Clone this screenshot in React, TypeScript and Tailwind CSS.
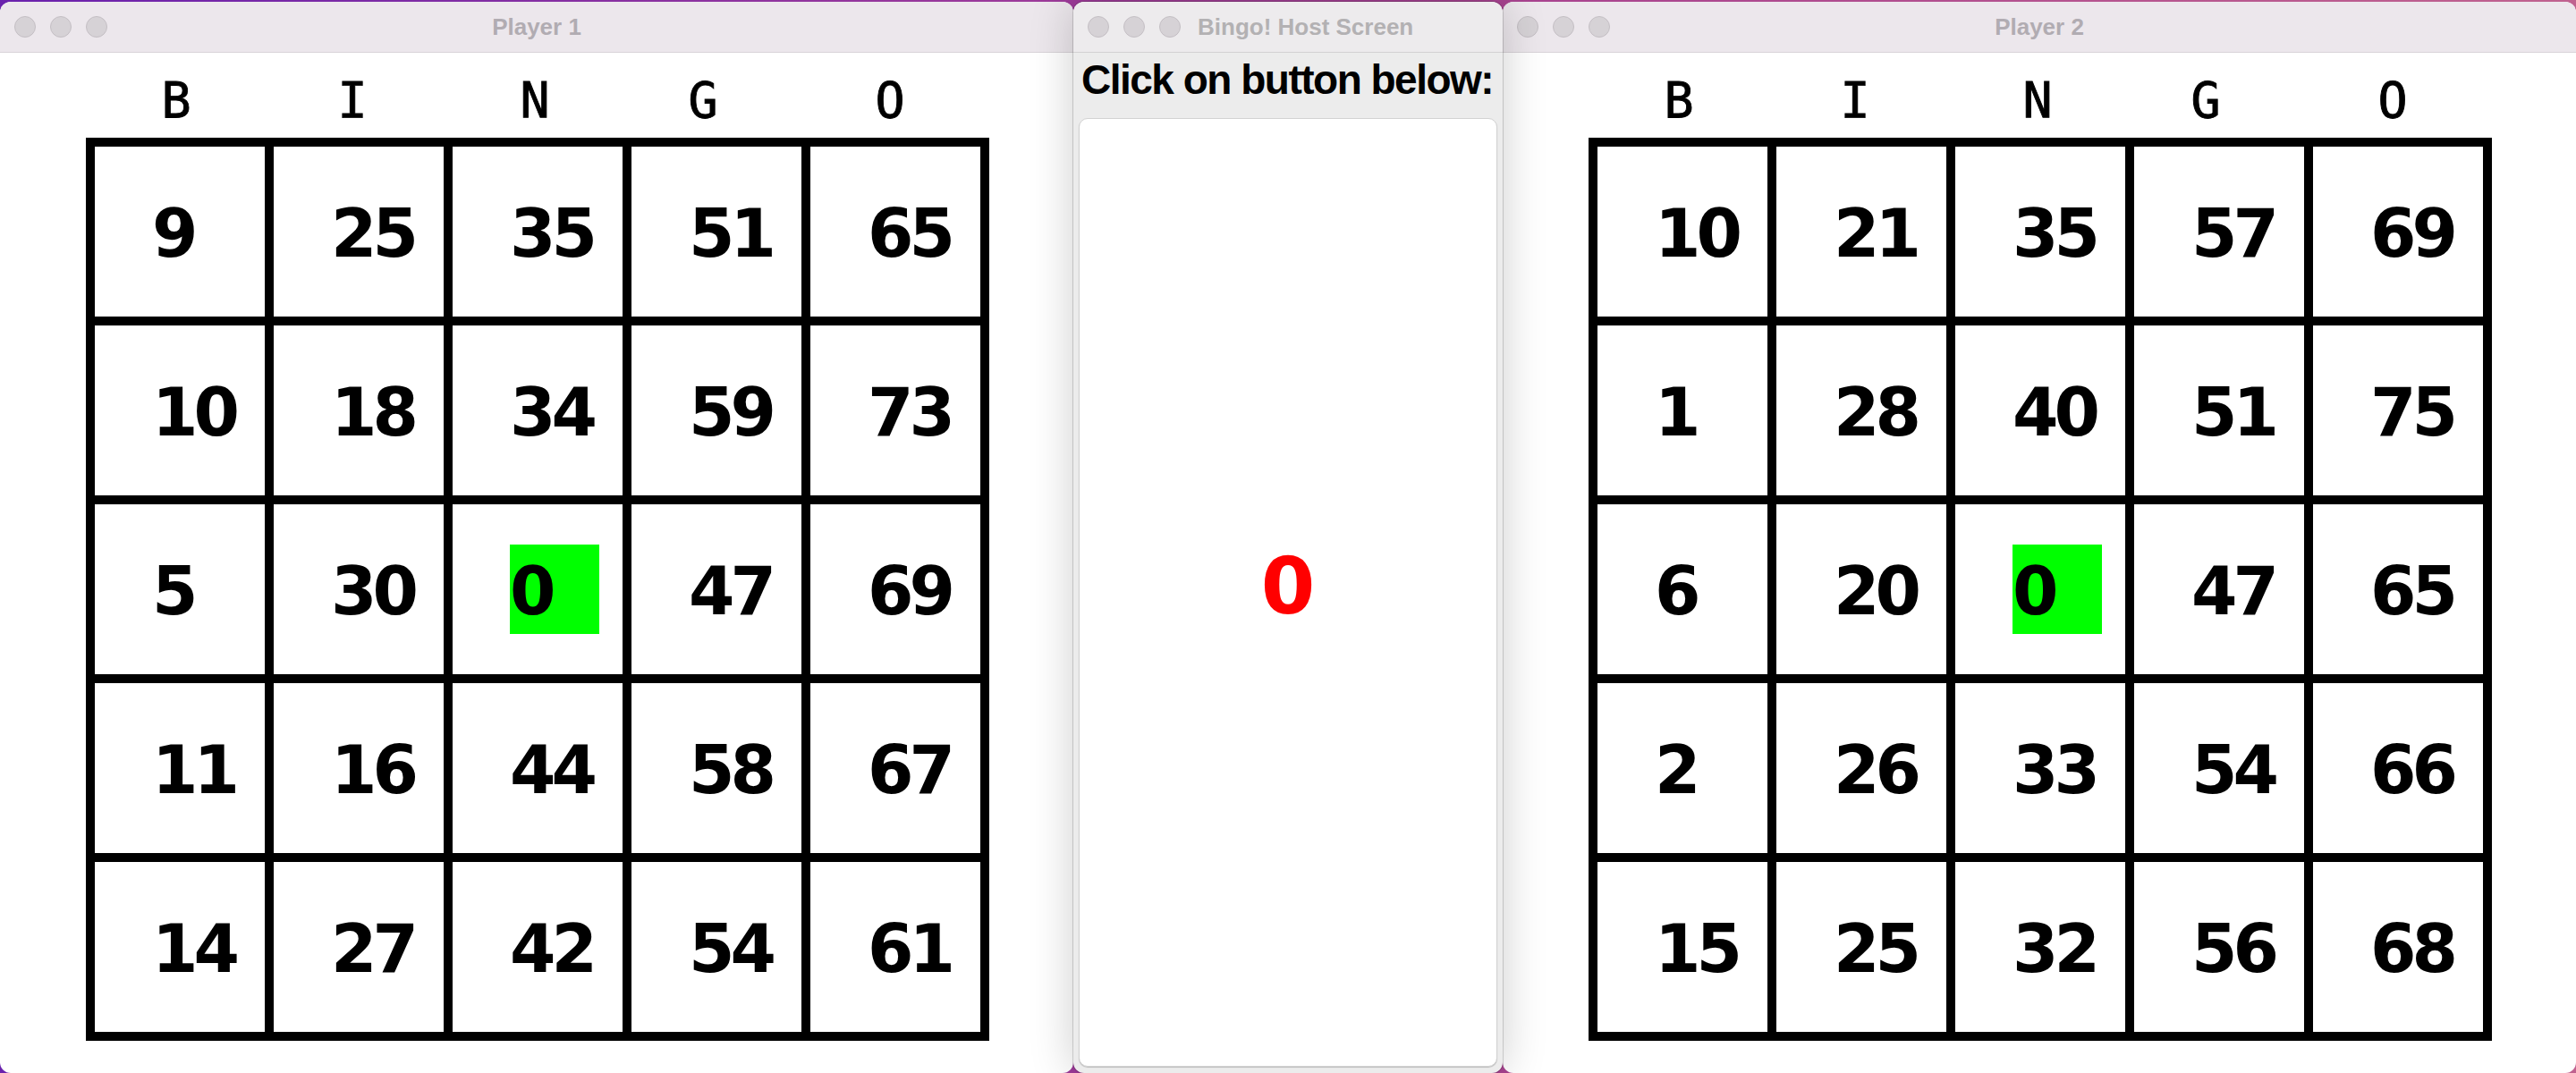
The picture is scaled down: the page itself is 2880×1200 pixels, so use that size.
import React from 'react';
import clsx from 'clsx';

const player1 = [
  [9, 25, 35, 51, 65],
  [10, 18, 34, 59, 73],
  [5, 30, 0, 47, 69],
  [11, 16, 44, 58, 67],
  [14, 27, 42, 54, 61],
];

const player2 = [
  [10, 21, 35, 57, 69],
  [1, 28, 40, 51, 75],
  [6, 20, 0, 47, 65],
  [2, 26, 33, 54, 66],
  [15, 25, 32, 56, 68],
];

// header letters don't sit exactly on the column centres in the original
const letters = [
  { ch: 'B', cls: 'pr-[8px]' },
  { ch: 'I', cls: 'pr-[14px]' },
  { ch: 'N', cls: 'pr-[6px]' },
  { ch: 'G', cls: 'pr-[30px]' },
  { ch: 'O', cls: 'pr-[12px]' },
];

const Lights = () => (
  <div className="flex items-center gap-[16px] pl-[16px]">
    {[0, 1, 2].map((i) => (
      <span key={i} className="h-[24px] w-[24px] rounded-full border border-[#c4bfc4] bg-[#d6d2d6]" />
    ))}
  </div>
);

const PlayerWindow = ({ title, card }: { title: string; card: number[][] }) => (
  <div className="flex h-[1198px] w-[1200px] shrink-0 flex-col overflow-hidden rounded-[12px] bg-white">
    <div className="grid h-[57px] grid-cols-[1fr_auto_1fr] items-center border-b border-[#d8d3d8] bg-[#ece7ec]">
      <Lights />
      <span className="font-['Liberation_Sans',sans-serif] text-[26px] leading-none font-bold text-[#b1acb2]">{title}</span>
      <span />
    </div>
    <div className="flex h-[95px] pt-[26px] pl-[101px]">
      {letters.map((l) => (
        <div
          key={l.ch}
          className={clsx(
            "w-[200px] text-center font-['DejaVu_Sans_Mono',monospace] text-[55px] leading-none text-black [-webkit-text-stroke:0.9px_black]",
            l.cls
          )}
        >
          {l.ch}
        </div>
      ))}
    </div>
    <div className="ml-[96px] grid w-[1010px] grid-cols-5 gap-[10px] bg-black p-[10px]">
      {card.flat().map((n, i) => (
        <div key={i} className="flex h-[190px] w-[190px] items-center bg-white pl-[64px]">
          <div className={clsx('flex h-[100px] w-[100px] items-center', n === 0 && 'bg-[#00ff00]')}>
            <span className="pt-[3px] font-['DejaVu_Sans',sans-serif] text-[74px] leading-none font-bold tracking-[-5px] text-black">
              {n}
            </span>
          </div>
        </div>
      ))}
    </div>
  </div>
);

const HostWindow = () => (
  <div className="relative z-10 flex h-[1198px] w-[480px] shrink-0 flex-col overflow-hidden rounded-[12px] bg-[#ececec] shadow-[0_0_50px_rgba(0,0,0,0.2)] ring-1 ring-black/15">
    <div className="flex h-[57px] items-center border-b border-[#d3d1d3] bg-[#edebed]">
      <Lights />
      <span className="ml-[19px] font-['Liberation_Sans',sans-serif] text-[26px] leading-none font-bold text-[#b3b1b3]">
        Bingo! Host Screen
      </span>
    </div>
    <div className="pt-[7px] pl-[9px] font-['Liberation_Sans',sans-serif] text-[46px] leading-none font-bold tracking-[-1.5px] text-black">
      Click on button below:
    </div>
    <button className="mx-[6px] mt-[20px] mb-[7px] flex flex-1 items-center justify-center rounded-[10px] border border-[#d2d2d2] bg-white pb-[13px] shadow-[0_1px_1px_rgba(0,0,0,0.2)]">
      <span className="font-['DejaVu_Sans',sans-serif] text-[87px] leading-none font-bold text-[#ff0000]">0</span>
    </button>
  </div>
);

export default function App() {
  return (
    <div className="flex h-[1200px] w-[2880px] overflow-hidden bg-[linear-gradient(90deg,#6a22ad,#9c3a9a_40%,#a9448f_60%,#c0628f)] pt-[2px]">
      <PlayerWindow title="Player 1" card={player1} />
      <HostWindow />
      <PlayerWindow title="Player 2" card={player2} />
    </div>
  );
}
